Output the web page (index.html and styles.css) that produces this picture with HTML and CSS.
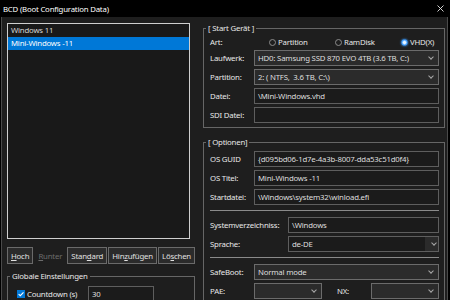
FILE: index.html
```html
<!DOCTYPE html>
<html lang="de">
<head>
    <meta charset="UTF-8">
    <title>BCD (Boot Configuration Data)</title>
    <link rel="stylesheet" href="styles.css">
</head>
<body>
    <div class="titlebar">
        <span class="title">BCD (Boot Configuration Data)</span>
        <svg class="close" width="7" height="7" viewBox="0 0 7 7">
            <path d="M0.5 0.5L6.5 6.5M6.5 0.5L0.5 6.5" stroke="#e8e8e8" stroke-width="0.9" fill="none"/>
        </svg>
    </div>
    <div class="window">
        <div class="left">
            <div class="list">
                <div class="item">Windows 11</div>
                <div class="item selected">Mini-Windows -11</div>
            </div>
            <div class="buttons">
                <button class="btn"><u>H</u>och</button>
                <button class="btn disabled"><u>R</u>unter</button>
                <button class="btn">Stan<u>d</u>ard</button>
                <button class="btn">Hin<u>z</u>ufügen</button>
                <button class="btn">Lö<u>s</u>chen</button>
            </div>
            <fieldset class="group global">
                <legend>Globale Einstellungen</legend>
                <div class="row">
                    <label class="check">
                        <span class="box">
                            <svg width="8" height="8" viewBox="0 0 8 8"><path d="M1.6 4.1L3.3 5.7L6.5 2.3" stroke="#fff" stroke-width="1.1" fill="none"/></svg>
                        </span>
                        Countdown (s)
                    </label>
                    <div class="field count">30</div>
                </div>
            </fieldset>
        </div>
        <div class="right">
            <fieldset class="group">
                <legend>[ Start Gerät ]</legend>
                <div class="row art">
                    <span class="label">Art:</span>
                    <div class="radios">
                        <span class="radio"><span class="dot"></span>Partition</span>
                        <span class="radio"><span class="dot"></span>RamDisk</span>
                        <span class="radio"><span class="dot on"></span>VHD(X)</span>
                    </div>
                </div>
                <div class="row">
                    <span class="label">Laufwerk:</span>
                    <div class="field select">HD0: Samsung SSD 870 EVO 4TB (3.6 TB, C:)<span class="arrow"></span></div>
                </div>
                <div class="row">
                    <span class="label">Partition:</span>
                    <div class="field select">2: ( NTFS,&nbsp;&nbsp;3.6 TB, C:\)<span class="arrow"></span></div>
                </div>
                <div class="row">
                    <span class="label">Datei:</span>
                    <div class="field">\Mini-Windows.vhd</div>
                </div>
                <div class="row">
                    <span class="label">SDI Datei:</span>
                    <div class="field"></div>
                </div>
            </fieldset>
            <fieldset class="group options">
                <legend>[ Optionen]</legend>
                <div class="row">
                    <span class="label">OS GUID</span>
                    <div class="field">{d095bd06-1d7e-4a3b-8007-dda53c51d0f4}</div>
                </div>
                <div class="row">
                    <span class="label">OS Titel:</span>
                    <div class="field">Mini-Windows -11</div>
                </div>
                <div class="row">
                    <span class="label">Startdatei:</span>
                    <div class="field">\Windows\system32\winload.efi</div>
                </div>
                <div class="sep"></div>
                <div class="row">
                    <span class="label wide">Systemverzeichniss:</span>
                    <div class="field">\Windows</div>
                </div>
                <div class="row">
                    <span class="label wide">Sprache:</span>
                    <div class="combo">
                        <span class="combo-text">de-DE</span>
                        <span class="combo-btn"><span class="arrow"></span></span>
                    </div>
                </div>
                <div class="sep"></div>
                <div class="row">
                    <span class="label">SafeBoot:</span>
                    <div class="field select">Normal mode<span class="arrow"></span></div>
                </div>
                <div class="row">
                    <span class="label">PAE:</span>
                    <div class="field select short"><span class="arrow"></span></div>
                    <span class="label nx">NX:</span>
                    <div class="field select short"><span class="arrow"></span></div>
                </div>
            </fieldset>
        </div>
    </div>
</body>
</html>
```

FILE: styles.css
```css
body {
    margin: 0;
    width: 450px;
    height: 300px;
    overflow: hidden;
    background-color: #000;
    font-family: "Noto Sans", "DejaVu Sans", sans-serif;
    font-size: 7.8px;
    letter-spacing: -0.2px;
    color: #e6e6e6;
}
.titlebar {
    height: 17px;
    display: flex;
    align-items: center;
    justify-content: space-between;
    padding: 0 6px 0 3px;
    color: #fff;
}
.window {
    box-sizing: border-box;
    height: 283px;
    width: 447px;
    margin-left: 1px;
    border-left: 1px solid #4a4a4a;
    border-right: 1px solid #4a4a4a;
    background-color: #1e1e1e;
    display: flex;
    gap: 8px;
    padding: 6px 2px 0 5px;
}
.left {
    width: 188px;
    flex: none;
}
.right {
    width: 242px;
    flex: none;
}
.list {
    box-sizing: border-box;
    width: 183px;
    height: 216px;
    border: 1px solid #cfcfcf;
    background-color: #191919;
}
.item {
    height: 13px;
    line-height: 13px;
    padding-left: 3px;
    color: #d6d6d6;
}
.item.selected {
    background-color: #0078d7;
    color: #fff;
}
.buttons {
    display: flex;
    justify-content: space-between;
    margin-top: 8px;
}
.btn {
    box-sizing: border-box;
    height: 17px;
    padding: 0 3px;
    border: 1px solid #6a6a6a;
    background-color: #2b2b2b;
    color: #e0e0e0;
    font: inherit;
    letter-spacing: inherit;
}
.btn.disabled {
    border-color: transparent;
    background-color: transparent;
    color: #6c6c6c;
}
.group {
    margin: 0;
    min-width: 0;
    border: 1px solid #666;
    padding: 4px 5px 4px 6px;
}
.group legend {
    padding: 0 2px;
    margin-left: -4px;
    line-height: 10px;
    color: #e8e8e8;
}
.global {
    margin-top: 7px;
    padding: 5px 5px 4px 9px;
}
.global legend {
    margin-left: -7px;
}
.options {
    margin-top: 9px;
}
.row {
    display: flex;
    align-items: center;
    height: 16px;
}
.row + .row {
    margin-top: 3px;
}
.row.art {
    height: 10px;
}
.label {
    width: 44px;
    flex: none;
    color: #e8e8e8;
}
.label.wide {
    width: 78px;
}
.label.nx {
    width: 34px;
    margin-left: 15px;
}
.field {
    box-sizing: border-box;
    flex: 1;
    height: 16px;
    display: flex;
    align-items: center;
    padding: 0 3px;
    border: 1px solid #5e5e5e;
    background-color: #1b1b1b;
    color: #dedede;
    white-space: nowrap;
}
.field.select {
    background-color: #2b2b2b;
    border-color: #6b6b6b;
}
.field.short {
    flex: none;
    width: 68px;
}
.field.count {
    flex: none;
    width: 66px;
}
.arrow {
    margin-left: auto;
    margin-right: 2px;
    margin-top: -3px;
    width: 3px;
    height: 3px;
    border-right: 1px solid #a8a8a8;
    border-bottom: 1px solid #a8a8a8;
    transform: rotate(45deg);
}
.combo {
    box-sizing: border-box;
    flex: 1;
    height: 16px;
    display: flex;
    border: 1px solid #5e5e5e;
}
.combo-text {
    flex: 1;
    display: flex;
    align-items: center;
    padding: 0 3px;
    background-color: #1b1b1b;
    color: #dedede;
}
.combo-btn {
    width: 13px;
    display: flex;
    align-items: center;
    background-color: #2b2b2b;
}
.sep {
    height: 1px;
    background-color: #8a8a8a;
    margin: 5px 0 6px;
}
.radios {
    display: flex;
    padding-left: 15px;
}
.radio {
    width: 66px;
    display: flex;
    align-items: center;
    gap: 2px;
}
.radio:last-child {
    width: auto;
}
.dot {
    box-sizing: border-box;
    width: 7px;
    height: 7px;
    border-radius: 50%;
    border: 1px solid #8c8c8c;
}
.dot.on {
    border-color: #3b9bff;
    background: radial-gradient(circle, #eaf5ff 0 30%, #45a3ff 75%);
    box-shadow: 0 0 2px #3a9cff;
}
.check {
    width: 71px;
    flex: none;
    display: flex;
    align-items: center;
    gap: 2px;
    color: #e8e8e8;
}
.box {
    width: 8px;
    height: 8px;
    display: flex;
    background-color: #0078d7;
}
```
